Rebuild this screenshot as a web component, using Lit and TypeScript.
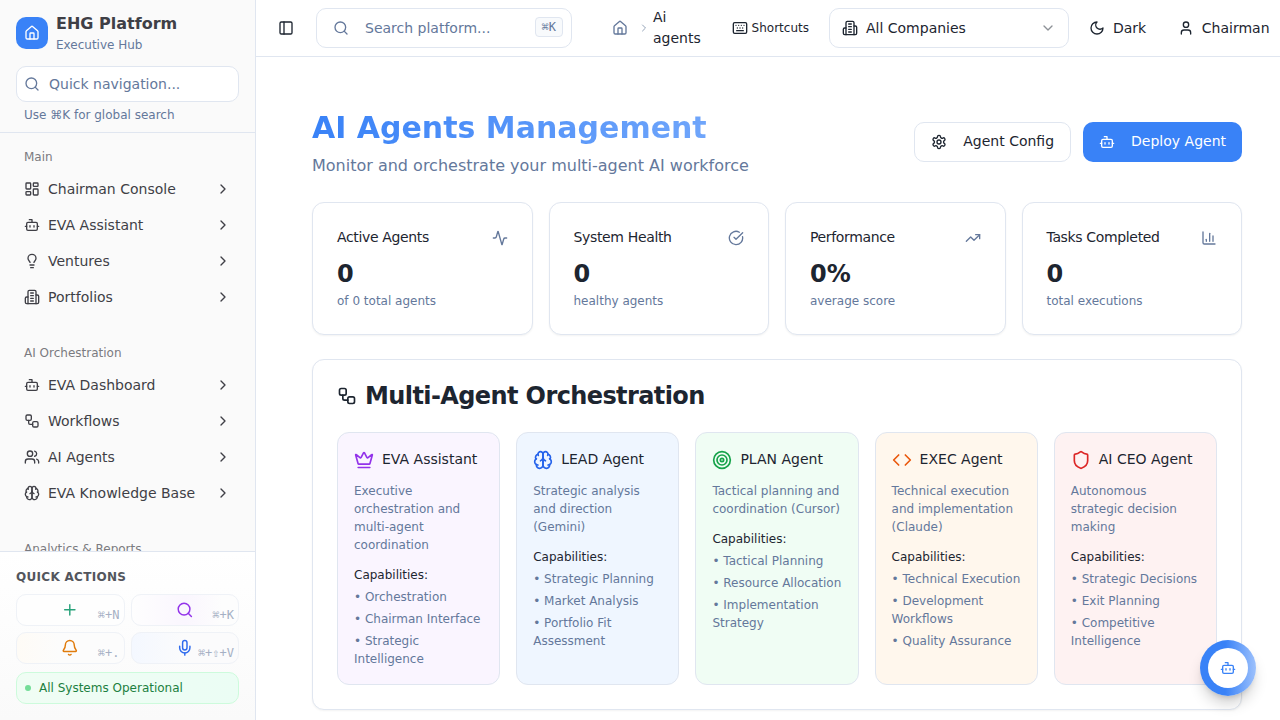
import { LitElement, html, css, svg } from "lit";
import { customElement, property } from "lit/decorators.js";

const ICONS: Record<string, unknown> = {
  home: svg`<path d="M15 21v-8a1 1 0 0 0-1-1h-4a1 1 0 0 0-1 1v8"/><path d="M3 10a2 2 0 0 1 .709-1.528l7-5.999a2 2 0 0 1 2.582 0l7 5.999A2 2 0 0 1 21 10v9a2 2 0 0 1-2 2H5a2 2 0 0 1-2-2z"/>`,
  search: svg`<circle cx="11" cy="11" r="8"/><path d="m21 21-4.3-4.3"/>`,
  dashboard: svg`<rect width="7" height="9" x="3" y="3" rx="1"/><rect width="7" height="5" x="14" y="3" rx="1"/><rect width="7" height="9" x="14" y="12" rx="1"/><rect width="7" height="5" x="3" y="16" rx="1"/>`,
  bot: svg`<path d="M12 8V4H8"/><rect width="16" height="12" x="4" y="8" rx="2"/><path d="M2 14h2"/><path d="M20 14h2"/><path d="M15 13v2"/><path d="M9 13v2"/>`,
  bulb: svg`<path d="M15 14c.2-1 .7-1.7 1.5-2.5 1-.9 1.5-2.2 1.5-3.5A6 6 0 0 0 6 8c0 1 .2 2.2 1.5 3.5.7.7 1.3 1.5 1.5 2.5"/><path d="M9 18h6"/><path d="M10 22h4"/>`,
  building: svg`<path d="M6 22V4a2 2 0 0 1 2-2h8a2 2 0 0 1 2 2v18Z"/><path d="M6 12H4a2 2 0 0 0-2 2v6a2 2 0 0 0 2 2h2"/><path d="M18 9h2a2 2 0 0 1 2 2v9a2 2 0 0 1-2 2h-2"/><path d="M10 6h4"/><path d="M10 10h4"/><path d="M10 14h4"/><path d="M10 18h4"/>`,
  workflow: svg`<rect width="8" height="8" x="3" y="3" rx="2"/><path d="M7 11v4a2 2 0 0 0 2 2h4"/><rect width="8" height="8" x="13" y="13" rx="2"/>`,
  users: svg`<path d="M16 21v-2a4 4 0 0 0-4-4H6a4 4 0 0 0-4 4v2"/><circle cx="9" cy="7" r="4"/><path d="M22 21v-2a4 4 0 0 0-3-3.87"/><path d="M16 3.13a4 4 0 0 1 0 7.75"/>`,
  brain: svg`<path d="M12 5a3 3 0 1 0-5.997.125 4 4 0 0 0-2.526 5.77 4 4 0 0 0 .556 6.588A4 4 0 1 0 12 18Z"/><path d="M12 5a3 3 0 1 1 5.997.125 4 4 0 0 1 2.526 5.77 4 4 0 0 1-.556 6.588A4 4 0 1 1 12 18Z"/><path d="M15 13a4.5 4.5 0 0 1-3-4 4.5 4.5 0 0 1-3 4"/><path d="M17.599 6.5a3 3 0 0 0 .399-1.375"/><path d="M6.003 5.125A3 3 0 0 0 6.401 6.5"/><path d="M3.477 10.896a4 4 0 0 1 .585-.396"/><path d="M19.938 10.5a4 4 0 0 1 .585.396"/><path d="M6 18a4 4 0 0 1-1.967-.516"/><path d="M19.967 17.484A4 4 0 0 1 18 18"/>`,
  right: svg`<path d="m9 18 6-6-6-6"/>`,
  down: svg`<path d="m6 9 6 6 6-6"/>`,
  plus: svg`<path d="M5 12h14"/><path d="M12 5v14"/>`,
  bell: svg`<path d="M10.268 21a2 2 0 0 0 3.464 0"/><path d="M3.262 15.326A1 1 0 0 0 4 17h16a1 1 0 0 0 .74-1.673C19.41 13.956 18 12.499 18 8A6 6 0 0 0 6 8c0 4.499-1.411 5.956-2.738 7.326"/>`,
  mic: svg`<path d="M12 2a3 3 0 0 0-3 3v7a3 3 0 0 0 6 0V5a3 3 0 0 0-3-3Z"/><path d="M19 10v2a7 7 0 0 1-14 0v-2"/><path d="M12 19v3"/>`,
  panel: svg`<rect width="18" height="18" x="3" y="3" rx="2"/><path d="M9 3v18"/>`,
  keyboard: svg`<path d="M10 8h.01"/><path d="M12 12h.01"/><path d="M14 8h.01"/><path d="M16 12h.01"/><path d="M18 8h.01"/><path d="M6 8h.01"/><path d="M7 16h10"/><path d="M8 12h.01"/><rect width="20" height="16" x="2" y="4" rx="2"/>`,
  moon: svg`<path d="M12 3a6 6 0 0 0 9 9 9 9 0 1 1-9-9Z"/>`,
  user: svg`<path d="M19 21v-2a4 4 0 0 0-4-4H9a4 4 0 0 0-4 4v2"/><circle cx="12" cy="7" r="4"/>`,
  settings: svg`<path d="M12.22 2h-.44a2 2 0 0 0-2 2v.18a2 2 0 0 1-1 1.73l-.43.25a2 2 0 0 1-2 0l-.15-.08a2 2 0 0 0-2.73.73l-.22.38a2 2 0 0 0 .73 2.73l.15.1a2 2 0 0 1 1 1.72v.51a2 2 0 0 1-1 1.74l-.15.09a2 2 0 0 0-.73 2.73l.22.38a2 2 0 0 0 2.73.73l.15-.08a2 2 0 0 1 2 0l.43.25a2 2 0 0 1 1 1.73V20a2 2 0 0 0 2 2h.44a2 2 0 0 0 2-2v-.18a2 2 0 0 1 1-1.73l.43-.25a2 2 0 0 1 2 0l.15.08a2 2 0 0 0 2.73-.73l.22-.39a2 2 0 0 0-.73-2.73l-.15-.08a2 2 0 0 1-1-1.74v-.5a2 2 0 0 1 1-1.74l.15-.09a2 2 0 0 0 .73-2.73l-.22-.38a2 2 0 0 0-2.73-.73l-.15.08a2 2 0 0 1-2 0l-.43-.25a2 2 0 0 1-1-1.73V4a2 2 0 0 0-2-2z"/><circle cx="12" cy="12" r="3"/>`,
  activity: svg`<path d="M22 12h-2.48a2 2 0 0 0-1.93 1.46l-2.35 8.36a.25.25 0 0 1-.48 0L9.24 2.18a.25.25 0 0 0-.48 0l-2.35 8.36A2 2 0 0 1 4.49 12H2"/>`,
  check: svg`<path d="M21.801 10A10 10 0 1 1 17 3.335"/><path d="m9 11 3 3L22 4"/>`,
  trend: svg`<path d="m22 7-8.5 8.5-5-5L2 17"/><path d="M16 7h6v6"/>`,
  chart: svg`<path d="M3 3v16a2 2 0 0 0 2 2h16"/><path d="M18 17V9"/><path d="M13 17V5"/><path d="M8 17v-3"/>`,
  crown: svg`<path d="M11.562 3.266a.5.5 0 0 1 .876 0L15.39 8.87a1 1 0 0 0 1.516.294L21.183 5.5a.5.5 0 0 1 .798.519l-2.834 10.246a1 1 0 0 1-.956.734H5.81a1 1 0 0 1-.957-.734L2.02 6.02a.5.5 0 0 1 .798-.519l4.276 3.664a1 1 0 0 0 1.516-.294z"/><path d="M5 21h14"/>`,
  target: svg`<circle cx="12" cy="12" r="10"/><circle cx="12" cy="12" r="6"/><circle cx="12" cy="12" r="2"/>`,
  code: svg`<path d="m16 18 6-6-6-6"/><path d="m8 6-6 6 6 6"/>`,
  shield: svg`<path d="M20 13c0 5-3.5 7.5-7.66 8.95a1 1 0 0 1-.67-.01C7.5 20.5 4 18 4 13V6a1 1 0 0 1 1-1c2 0 4.5-1.2 6.24-2.72a1.17 1.17 0 0 1 1.52 0C14.51 3.81 17 5 19 5a1 1 0 0 1 1 1z"/>`,
};

@customElement("ui-icon")
class UiIcon extends LitElement {
  @property() name = "";
  static styles = css`
    :host { display: block; flex: none; width: 16px; height: 16px; }
    svg { display: block; width: 100%; height: 100%; fill: none; stroke: currentColor; stroke-width: 2; stroke-linecap: round; stroke-linejoin: round; }
  `;
  render() {
    return html`<svg viewBox="0 0 24 24">${ICONS[this.name]}</svg>`;
  }
}

@customElement("app-sidebar")
class AppSidebar extends LitElement {
  groups = [
    { label: "Main", items: [["dashboard", "Chairman Console"], ["bot", "EVA Assistant"], ["bulb", "Ventures"], ["building", "Portfolios"]] },
    { label: "AI Orchestration", items: [["bot", "EVA Dashboard"], ["workflow", "Workflows"], ["users", "AI Agents"], ["brain", "EVA Knowledge Base"]] },
    { label: "Analytics & Reports", items: [] },
  ];
  actions = [
    ["plus", "⌘+N", "green"],
    ["search", "⌘+K", "purple"],
    ["bell", "⌘+.", "amber"],
    ["mic", "⌘+⇧+V", "blue"],
  ];
  static styles = css`
    :host { display: flex; flex-direction: column; box-sizing: border-box; width: 256px; height: 100%; background: #fafafa; border-right: 1px solid #e0e6f0; color: #3f3f46; }
    .head { flex: none; box-sizing: border-box; height: 133px; padding: 9px 16px 0; border-bottom: 1px solid #e0e6f0; }
    .brand { display: flex; align-items: center; gap: 8px; height: 48px; }
    .logo { display: grid; place-items: center; width: 32px; height: 32px; border-radius: 10px; background: #3982f7; color: #fff; }
    .name { font-size: 16px; font-weight: 700; line-height: 26px; }
    .sub { margin-bottom: 3px; font-size: 12px; line-height: 16px; color: #64789b; }
    .find { display: flex; align-items: center; gap: 9px; box-sizing: border-box; height: 36px; margin-top: 9px; padding: 0 7px; border: 1px solid #e0e6f0; border-radius: 10px; background: #fff; color: #64789b; font-size: 14px; }
    .hint { margin: 5px 8px 0; font-size: 12px; line-height: 16px; color: #64789b; }
    .nav { flex: 1; min-height: 0; overflow: hidden; padding: 8px 16px 0; display: flex; flex-direction: column; gap: 24px; }
    .group { flex: none; display: flex; flex-direction: column; gap: 4px; }
    .label { height: 32px; margin: 0 8px -4px; line-height: 32px; font-size: 12px; color: #7b7b80; }
    .item { display: flex; align-items: center; gap: 8px; height: 32px; padding: 0 8px; font-size: 14px; }
    .text { flex: 1; }
    .foot { flex: none; box-sizing: border-box; height: 169px; padding: 16px 16px 0; border-top: 1px solid #e0e6f0; background: linear-gradient(#fff, #fafafa); }
    .title { font-size: 12px; font-weight: 700; line-height: 18px; letter-spacing: 0.3px; color: #53565d; }
    .grid { display: grid; grid-template-columns: 1fr 1fr; gap: 6px; margin-top: 8px; }
    .act { position: relative; display: grid; place-items: center; box-sizing: border-box; height: 32px; border: 1px solid #eff2f7; border-radius: 10px; }
    .act ui-icon { width: 17.6px; height: 17.6px; }
    .green { color: #29a37b; background: #fefefe; }
    .purple { color: #9333ea; background: linear-gradient(90deg, #fefefe, #faf6fe 50%, #fdfdfd 85%); }
    .amber { color: #e07b0c; background: linear-gradient(90deg, #fefbf6, #fcfcfc 40%); }
    .blue { color: #2f6bee; background: linear-gradient(90deg, #f4f8ff, #fbfbfc 50%); }
    .key { position: absolute; right: 4px; bottom: 2px; font: 12px/16px "DejaVu Sans Mono", monospace; color: #a5b0c4; }
    .status { display: flex; align-items: center; gap: 8px; box-sizing: border-box; height: 32px; margin-top: 8px; padding: 0 8px; border: 1px solid #cdfbdc; border-radius: 10px; background: linear-gradient(90deg, #f0fdf4, #ebfdf4); font-size: 12px; color: #1c8040; }
    .dot { width: 6px; height: 6px; border-radius: 50%; background: #74dd98; }
  `;
  render() {
    return html`
      <div class="head">
        <div class="brand">
          <div class="logo"><ui-icon name="home"></ui-icon></div>
          <div><div class="name">EHG Platform</div><div class="sub">Executive Hub</div></div>
        </div>
        <div class="find"><ui-icon name="search"></ui-icon><span>Quick navigation...</span></div>
        <div class="hint">Use ⌘K for global search</div>
      </div>
      <div class="nav">
        ${this.groups.map((g) => html`<div class="group">
          <div class="label">${g.label}</div>
          ${g.items.map(([icon, text]) => html`<div class="item"><ui-icon name=${icon}></ui-icon><span class="text">${text}</span><ui-icon name="right"></ui-icon></div>`)}
        </div>`)}
      </div>
      <div class="foot">
        <div class="title">QUICK ACTIONS</div>
        <div class="grid">
          ${this.actions.map(([icon, key, tone]) => html`<div class="act ${tone}"><ui-icon name=${icon}></ui-icon><span class="key">${key}</span></div>`)}
        </div>
        <div class="status"><span class="dot"></span>All Systems Operational</div>
      </div>
    `;
  }
}

@customElement("app-topbar")
class AppTopbar extends LitElement {
  static styles = css`
    :host { display: flex; align-items: center; box-sizing: border-box; height: 57px; padding-left: 22px; border-bottom: 1px solid #e0e6f0; background: #fff; font-size: 14px; white-space: nowrap; color: #1d2530; }
    .search { display: flex; align-items: center; box-sizing: border-box; width: 256px; height: 40px; margin-left: 22px; padding: 0 8px 0 16px; border: 1px solid #e0e6f0; border-radius: 10px; color: #64789b; }
    .search .ph { flex: 1; margin-left: 16px; }
    .kbd { box-sizing: border-box; height: 20px; margin-bottom: 2px; padding: 0 6px; border: 1px solid #e0e6f0; border-radius: 4px; background: #f8fafc; font: 12px/18px "DejaVu Sans Mono", monospace; }
    .home { margin-left: 40px; color: #64789b; }
    .sep { width: 12px; height: 12px; margin-left: 10px; color: #94a3b8; }
    .crumb { width: 54.6px; margin-left: 3px; line-height: 21px; white-space: normal; }
    .short { display: flex; align-items: center; gap: 4px; margin-left: 24px; font-size: 12px; }
    .select { display: flex; align-items: center; box-sizing: border-box; width: 240px; height: 40px; margin-left: 20px; padding: 0 12px; border: 1px solid #e0e6f0; border-radius: 10px; }
    .select .all { flex: 1; margin-left: 8px; }
    .chev { opacity: 0.5; }
    .pair { display: flex; align-items: center; gap: 8px; }
    .dark { margin-left: 20px; }
    .user { margin-left: 31.6px; }
  `;
  render() {
    return html`
      <ui-icon name="panel"></ui-icon>
      <div class="search"><ui-icon name="search"></ui-icon><span class="ph">Search platform...</span><span class="kbd">⌘K</span></div>
      <ui-icon class="home" name="home"></ui-icon>
      <ui-icon class="sep" name="right"></ui-icon>
      <span class="crumb">Ai agents</span>
      <span class="short"><ui-icon name="keyboard"></ui-icon>Shortcuts</span>
      <div class="select"><ui-icon name="building"></ui-icon><span class="all">All Companies</span><ui-icon class="chev" name="down"></ui-icon></div>
      <span class="pair dark"><ui-icon name="moon"></ui-icon>Dark</span>
      <span class="pair user"><ui-icon name="user"></ui-icon>Chairman</span>
    `;
  }
}

@customElement("app-root")
class AppRoot extends LitElement {
  stats = [
    ["Active Agents", "activity", "0", "of 0 total agents"],
    ["System Health", "check", "0", "healthy agents"],
    ["Performance", "trend", "0%", "average score"],
    ["Tasks Completed", "chart", "0", "total executions"],
  ];
  agents = [
    { tone: "violet", icon: "crown", name: "EVA Assistant", text: "Executive orchestration and multi-agent coordination", caps: ["Orchestration", "Chairman Interface", "Strategic Intelligence"] },
    { tone: "blue", icon: "brain", name: "LEAD Agent", text: "Strategic analysis and direction (Gemini)", caps: ["Strategic Planning", "Market Analysis", "Portfolio Fit Assessment"] },
    { tone: "green", icon: "target", name: "PLAN Agent", text: "Tactical planning and coordination (Cursor)", caps: ["Tactical Planning", "Resource Allocation", "Implementation Strategy"] },
    { tone: "orange", icon: "code", name: "EXEC Agent", text: "Technical execution and implementation (Claude)", caps: ["Technical Execution", "Development Workflows", "Quality Assurance"] },
    { tone: "red", icon: "shield", name: "AI CEO Agent", text: "Autonomous strategic decision making", caps: ["Strategic Decisions", "Exit Planning", "Competitive Intelligence"] },
  ];
  static styles = css`
    :host { display: flex; width: 1280px; height: 720px; overflow: hidden; background: #fff; color: #1d2530; font-family: "DejaVu Sans", sans-serif; font-size: 14px; }
    app-sidebar { flex: none; }
    .main { flex: 1; min-width: 0; display: flex; flex-direction: column; }
    app-topbar { flex: none; }
    .page { flex: 1; min-height: 0; padding: 49px 38px 0 56px; }
    .hero { display: flex; align-items: center; justify-content: space-between; height: 72px; }
    h1 { margin: 0; font-size: 30px; line-height: 42px; font-weight: 700; background: linear-gradient(90deg, #3982f7, #75a9fb); -webkit-background-clip: text; background-clip: text; color: transparent; }
    .lead { font-size: 16px; line-height: 24px; margin-top: 5px; color: #64789b; }
    .btns { display: flex; gap: 12px; }
    .btn { display: flex; align-items: center; gap: 16px; box-sizing: border-box; height: 40px; padding: 0 16px; border: 1px solid #e0e6f0; border-radius: 10px; }
    .btn span { margin-top: -2px; }
    .primary { background: #3982f7; border: 0; color: #fff; }
    .stats { display: grid; grid-template-columns: repeat(4, 1fr); gap: 16px; margin-top: 24px; }
    .card { box-sizing: border-box; border: 1px solid #e0e6f0; border-radius: 12px; background: #fff; box-shadow: 0 1px 2px rgba(0, 0, 0, 0.05); }
    .stat { height: 133px; padding: 23px 24px; }
    .row { display: flex; align-items: center; justify-content: space-between; height: 21px; letter-spacing: -0.35px; color: #1d2530; }
    .row ui-icon { color: #64789b; margin-top: 2px; }
    .value { margin-top: 11px; font-size: 24px; line-height: 32px; font-weight: 700; }
    .note { margin-top: 2px; font-size: 12px; line-height: 18px; color: #64789b; }
    .panel { height: 351px; margin-top: 24px; padding: 20px 24px 0; }
    .ptitle { display: flex; align-items: center; gap: 8px; height: 32px; font-size: 24px; font-weight: 700; letter-spacing: -0.6px; }
    .ptitle ui-icon, .aname ui-icon { width: 20px; height: 20px; }
    .agents { display: grid; grid-template-columns: repeat(5, 1fr); gap: 16px; height: 253px; margin-top: 20px; }
    .agent { box-sizing: border-box; padding: 16px; border: 1px solid #e0e6f0; border-radius: 12px; font-size: 12px; line-height: 18px; color: #64789b; }
    .aname { display: flex; align-items: center; gap: 8px; height: 21px; font-size: 14px; color: #1d2530; }
    .aname span { margin-top: -2px; }
    .aname ui-icon { margin-top: 1px; }
    .desc { margin-top: 12px; }
    .caps { margin-top: 12px; color: #1d2530; }
    .cap { margin-top: 4px; }
    .violet { background: #faf5ff; } .violet ui-icon { color: #9333ea; }
    .blue { background: #eff6ff; } .blue ui-icon { color: #2563eb; }
    .green { background: #f0fdf4; } .green ui-icon { color: #16a34a; }
    .orange { background: #fff7ed; } .orange ui-icon { color: #ea580c; }
    .red { background: #fef2f2; } .red ui-icon { color: #dc2626; }
    .fab { position: absolute; left: 1200px; top: 640px; display: grid; place-items: center; width: 56px; height: 56px; border-radius: 50%; background: linear-gradient(90deg, #3982f7 45%, #9dc1fc); box-shadow: 0 10px 15px -3px rgba(0, 0, 0, 0.2), 0 4px 6px -4px rgba(0, 0, 0, 0.2); }
    .inner { display: grid; place-items: center; width: 40px; height: 40px; border-radius: 50%; background: #fff; color: #3982f7; }
  `;
  render() {
    return html`
      <app-sidebar></app-sidebar>
      <div class="main">
        <app-topbar></app-topbar>
        <div class="page">
          <div class="hero">
            <div><h1>AI Agents Management</h1><div class="lead">Monitor and orchestrate your multi-agent AI workforce</div></div>
            <div class="btns">
              <div class="btn"><ui-icon name="settings"></ui-icon><span>Agent Config</span></div>
              <div class="btn primary"><ui-icon name="bot"></ui-icon><span>Deploy Agent</span></div>
            </div>
          </div>
          <div class="stats">
            ${this.stats.map(([label, icon, value, note]) => html`<div class="card stat">
              <div class="row"><span>${label}</span><ui-icon name=${icon}></ui-icon></div>
              <div class="value">${value}</div>
              <div class="note">${note}</div>
            </div>`)}
          </div>
          <div class="card panel">
            <div class="ptitle"><ui-icon name="workflow"></ui-icon><span>Multi-Agent Orchestration</span></div>
            <div class="agents">
              ${this.agents.map((a) => html`<div class="agent ${a.tone}">
                <div class="aname"><ui-icon name=${a.icon}></ui-icon><span>${a.name}</span></div>
                <div class="desc">${a.text}</div>
                <div class="caps">Capabilities:</div>
                ${a.caps.map((c) => html`<div class="cap">• ${c}</div>`)}
              </div>`)}
            </div>
          </div>
        </div>
      </div>
      <div class="fab"><div class="inner"><ui-icon name="bot"></ui-icon></div></div>
    `;
  }
}
